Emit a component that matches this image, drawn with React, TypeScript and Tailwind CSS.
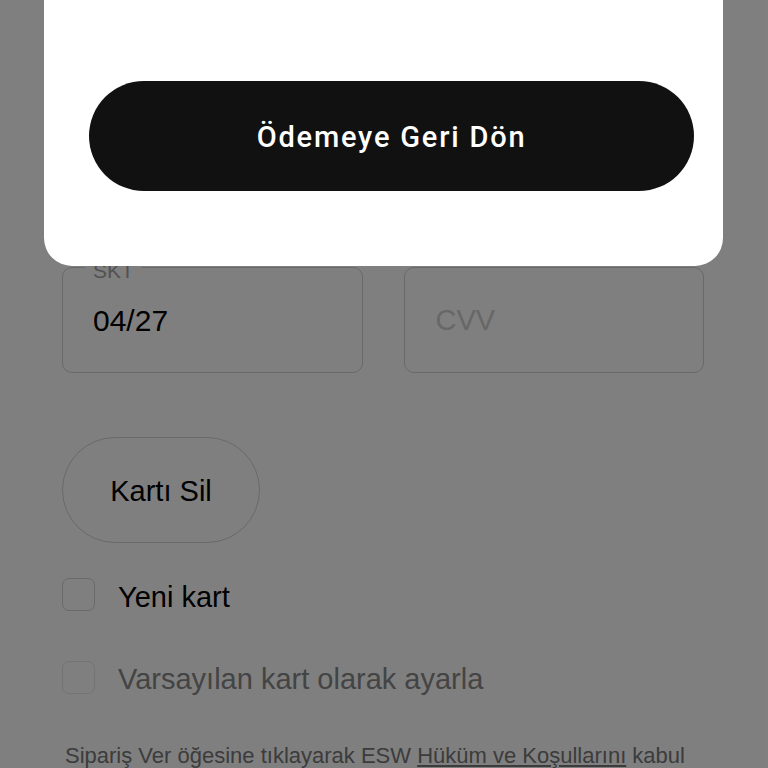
export default function App() {
  return (
    <div className="relative h-[768px] w-[768px] overflow-hidden bg-white font-['Liberation_Sans',Arial,sans-serif] text-black">
      {/* page behind the sheet */}
      <div className="pl-[62px] pr-[64px] pt-[267px]">
        <div className="grid grid-cols-2 gap-[41px]">
          <div className="relative flex h-[106px] items-center rounded-[10px] border border-[#d2d2d2] px-[30px]">
            <span className="absolute -top-[13px] left-[22px] bg-white px-2 text-[21px] text-[#a4a4a4]">SKT</span>
            <span className="text-[30px]">04/27</span>
          </div>
          <div className="flex h-[106px] items-center rounded-[10px] border border-[#d2d2d2] px-[31px]">
            <span className="pt-[2px] text-[29px] text-[#cfcfcf]">CVV</span>
          </div>
        </div>

        <button className="mt-[64px] flex h-[106px] w-[198px] items-center justify-center rounded-full border border-[#d2d2d2] pt-[3px] text-[29px]">
          Kartı Sil
        </button>

        <div className="mt-[35px] flex h-[33px] items-center gap-[23px]">
          <span className="h-[33px] w-[33px] shrink-0 rounded-[7px] border border-[#d2d2d2]" />
          <span className="pt-[5px] text-[29px] leading-none">Yeni kart</span>
        </div>

        <div className="mt-[50px] flex h-[33px] items-center gap-[23px]">
          <span className="h-[33px] w-[33px] shrink-0 rounded-[7px] border border-[#e6e6e6]" />
          <span className="pt-[4px] text-[29px] leading-none text-[#888888]">Varsayılan kart olarak ayarla</span>
        </div>

        <p className="mt-[47px] pl-[3px] text-[22px] leading-[30px] text-[#787878]">
          Sipariş Ver öğesine tıklayarak ESW <span className="underline">Hüküm ve Koşullarını</span> kabul etmiş olursunuz.
        </p>
      </div>

      {/* dim overlay */}
      <div className="absolute inset-0 bg-black/50" />

      {/* sheet */}
      <div className="absolute left-[44px] right-[45px] top-0 h-[266px] rounded-b-[28px] bg-white pl-[45px] pr-[29px] pt-[81px]">
        <button className="flex h-[110px] w-full items-center justify-center rounded-full bg-[#111111] pt-[3px] font-['Roboto',sans-serif] text-[29px] font-medium tracking-[1.8px] text-white">
          Ödemeye Geri Dön
        </button>
      </div>
    </div>
  )
}
